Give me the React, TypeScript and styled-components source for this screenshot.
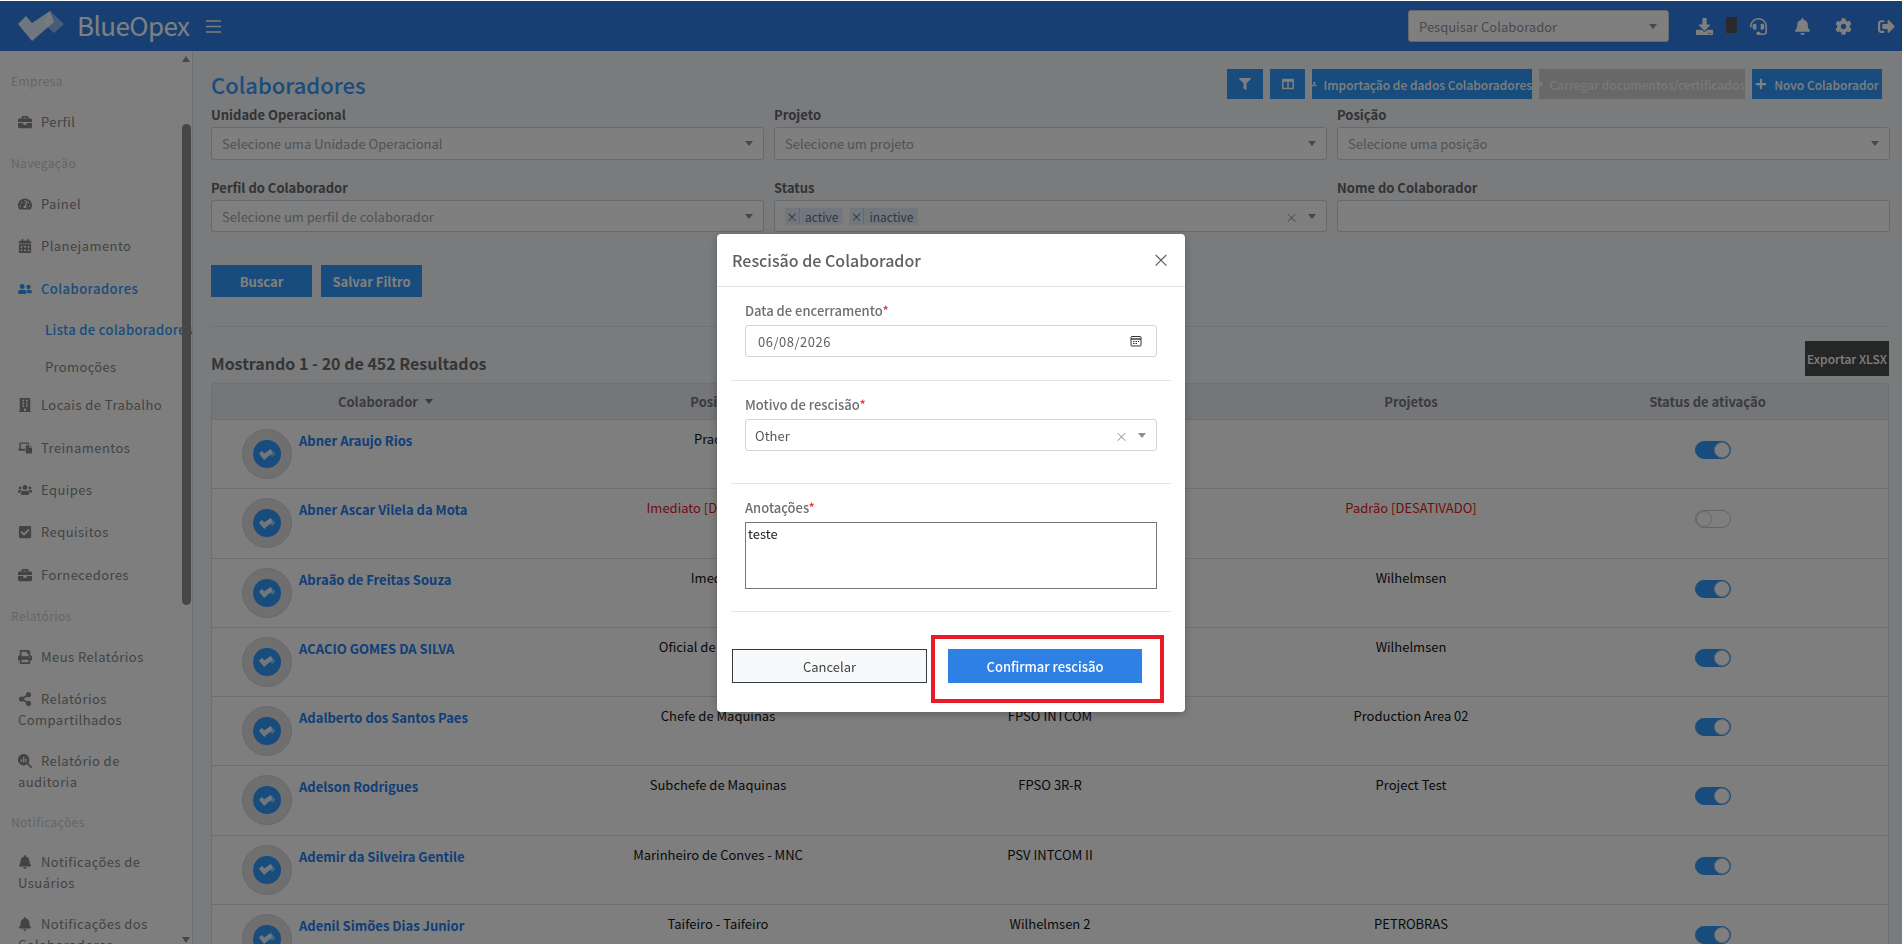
import React from "react";
import styled, { createGlobalStyle } from "styled-components";
import {
  FaBriefcase, FaTachometerAlt, FaCalendarAlt, FaUserFriends, FaBuilding, FaUsers, FaCheckSquare,
  FaPrint, FaShareAlt, FaBell, FaDownload, FaHeadset, FaCog, FaSignOutAlt, FaFilter, FaColumns,
  FaUpload, FaFile, FaPlus,
} from "react-icons/fa";
import { FaLaptopFile, FaMagnifyingGlassChart } from "react-icons/fa6";

const FONT = `"Noto Sans CJK JP", "Noto Sans", sans-serif`;
const BLUE = "#2f7fe6";
const PRIMARY = "#3098f8";

const Global = createGlobalStyle`
  html, body { margin: 0; padding: 0; height: 944px; overflow: hidden; background: #fff; }
  body { padding-top: 1px; box-sizing: border-box; font-family: ${FONT}; font-size: 13px; }
  * { box-sizing: border-box; }
`;

const Shell = styled.div`
  width: 1902px;
  height: 943px;
  display: flex;
  flex-direction: column;
  overflow: hidden;
`;
const TopBar = styled.header`
  height: 50px;
  flex: none;
  background: ${BLUE};
  display: flex;
  align-items: center;
  padding-left: 18px;
`;
const Brand = styled.div`
  display: flex;
  align-items: center;
  width: 188px;
  gap: 13px;
`;
const BrandName = styled.span`
  color: #fff;
  font-size: 26px;
  line-height: 30px;
  letter-spacing: -0.6px;
  margin-top: -2px;
`;
const SearchBox = styled.div`
  margin-left: auto;
  width: 261px;
  height: 32px;
  background: #fff;
  border: 1px solid #ced4da;
  border-radius: 3px;
  display: flex;
  align-items: center;
  justify-content: space-between;
  padding: 0 11px 0 10px;
  color: #8f9499;
  font-size: 13px;
`;
const Caret = styled.i`
  width: 0;
  height: 0;
  border-left: 4px solid transparent;
  border-right: 4px solid transparent;
  border-top: 5px solid #8a8f94;
  flex: none;
`;
const TopIcons = styled.div`
  display: flex;
  align-items: center;
  width: 233px;
  padding-left: 27px;
  color: #fff;
  font-size: 17px;
  position: relative;
`;
const TopIcon = styled.span<{ $w: number }>`
  width: ${(p) => p.$w}px;
  display: flex;
`;
const Phone = styled.i`
  position: absolute;
  left: 57px;
  top: -1px;
  width: 11px;
  height: 16px;
  background: #555;
  border-radius: 1px;
`;
const Body = styled.div`
  flex: 1;
  display: flex;
  min-height: 0;
`;
const Side = styled.aside`
  width: 193px;
  flex: none;
  display: flex;
  background: #fdfdfd;
  border-right: 1px solid #dcdfe3;
  overflow: hidden;
`;
const Nav = styled.nav`
  width: 180px;
  flex: none;
  padding-top: 10px;
`;
const SectionTitle = styled.div`
  height: 40px;
  line-height: 40px;
  padding-left: 11px;
  color: #c6ccd2;
  font-size: 12px;
  letter-spacing: 0.4px;
`;
const Item = styled.div<{ $active?: boolean }>`
  padding: 10.7px 0 10.7px 18px;
  line-height: 19px;
  color: ${(p) => (p.$active ? PRIMARY : "#868686")};
  font-size: 13px;
  letter-spacing: 0.45px;
  font-weight: ${(p) => (p.$active ? 500 : 400)};
`;
const ItemIcon = styled.span`
  display: inline-block;
  width: 23px;
  font-size: 14px;
  vertical-align: -2px;
`;
const SubItem = styled.div<{ $active?: boolean }>`
  height: 37px;
  line-height: 37px;
  padding-left: 45px;
  white-space: nowrap;
  color: ${(p) => (p.$active ? PRIMARY : "#868686")};
  font-weight: ${(p) => (p.$active ? 500 : 400)};
  letter-spacing: 0.35px;
`;
const ScrollTrack = styled.div`
  width: 10px;
  margin-left: 1px;
  flex: none;
  display: flex;
  flex-direction: column;
  align-items: center;
  padding-top: 5px;
`;
const ArrowUp = styled.i`
  width: 0;
  height: 0;
  border-left: 4px solid transparent;
  border-right: 4px solid transparent;
  border-bottom: 6px solid #8e8e8e;
`;
const ArrowDown = styled.i`
  width: 0;
  height: 0;
  margin-top: 332px;
  border-left: 4px solid transparent;
  border-right: 4px solid transparent;
  border-top: 6px solid #8e8e8e;
`;
const Thumb = styled.div`
  width: 9px;
  height: 481px;
  margin-top: 62px;
  background: #8e8e8e;
  border-radius: 5px;
  flex: none;
`;
const Main = styled.main`
  flex: 1;
  background: #f4f7fb;
  padding: 18px 13px 0 18px;
  min-width: 0;
`;
const TitleRow = styled.div`
  display: flex;
  align-items: center;
  justify-content: space-between;
  height: 30px;
`;
const Title = styled.h1`
  margin: 0;
  font-size: 22px;
  line-height: 30px;
  font-weight: 500;
  color: ${PRIMARY};
`;
const Actions = styled.div`
  display: flex;
  gap: 7px;
  margin-right: 7px;
`;
const ActionBtn = styled.div<{ $w: number; $disabled?: boolean }>`
  width: ${(p) => p.$w}px;
  height: 30px;
  background: ${(p) => (p.$disabled ? "#d0d0d0" : PRIMARY)};
  color: ${(p) => (p.$disabled ? "#f2f2f2" : "#fff")};
  display: flex;
  align-items: center;
  justify-content: center;
  gap: 7px;
  font-size: 12px;
  font-weight: 500;
  white-space: nowrap;
`;
const FilterGrid = styled.div`
  display: grid;
  grid-template-columns: 553px 553px 553px;
  column-gap: 10px;
  margin-top: 4px;
`;
const FilterField = styled.div`
  height: 73px;
`;
const FilterLabel = styled.div`
  height: 24px;
  line-height: 24px;
  font-size: 13px;
  font-weight: 600;
  color: #666;
`;
const SelectBox = styled.div<{ $h?: number }>`
  height: ${(p) => p.$h ?? 33}px;
  background: #fff;
  border: 1px solid #ced4da;
  border-radius: 3px;
  display: flex;
  align-items: center;
  justify-content: space-between;
  padding: 0 10px;
  font-size: 13px;
  color: #a0a4a8;
`;
const Tags = styled.div`
  display: flex;
  gap: 6px;
`;
const Tag = styled.span`
  display: flex;
  height: 17px;
  line-height: 17px;
  background: #e3eef9;
  color: #5a6f86;
  font-size: 12px;
  border-radius: 2px;
`;
const TagX = styled.span`
  width: 15px;
  text-align: center;
  border-right: 1px solid #c2d4e6;
`;
const TagText = styled.span`
  padding: 0 5px;
`;
const SelectEnd = styled.div`
  display: flex;
  align-items: center;
  gap: 10px;
  color: #9a9ea3;
`;
const Buttons = styled.div`
  display: flex;
  gap: 9px;
  margin-top: 16px;
`;
const SearchBtn = styled.div`
  width: 101px;
  height: 32px;
  background: ${PRIMARY};
  color: #fff;
  font-weight: 600;
  font-size: 13px;
  display: flex;
  align-items: center;
  justify-content: center;
`;
const Divider = styled.hr`
  margin: 29px 0 0;
  border: 0;
  border-top: 1px solid #dfe3e8;
`;
const ResultRow = styled.div`
  display: flex;
  align-items: center;
  justify-content: space-between;
  height: 35px;
  margin-top: 14px;
  margin-bottom: 7px;
`;
const ResultText = styled.div`
  font-size: 16px;
  font-weight: 600;
  color: #6a6a6a;
  margin-top: 8px;
`;
const ExportBtn = styled.div`
  width: 84px;
  height: 35px;
  background: #4a4c4d;
  color: #fff;
  font-size: 12px;
  font-weight: 500;
  display: flex;
  align-items: center;
  justify-content: center;
`;
const Table = styled.div`
  border: 1px solid #dcdfe3;
  border-bottom: 0;
  border-radius: 4px 4px 0 0;
  background: #fdfdfd;
`;
const Row = styled.div<{ $head?: boolean }>`
  display: grid;
  grid-template-columns: 347px 318px 346px 376px 1fr;
  height: ${(p) => (p.$head ? "36px" : "69.25px")};
  border-bottom: 1px solid #dcdfe3;
  ${(p) => (p.$head ? "background: #e8ecf2; align-items: center;" : "")}
`;
const HeadCell = styled.div<{ $pr?: number }>`
  text-align: center;
  font-size: 13px;
  font-weight: 600;
  color: #777;
  padding-right: ${(p) => p.$pr ?? 0}px;
  display: flex;
  align-items: center;
  justify-content: center;
  gap: 7px;
`;
const SortCaret = styled.i`
  width: 0;
  height: 0;
  border-left: 4.5px solid transparent;
  border-right: 4.5px solid transparent;
  border-top: 5px solid #777;
`;
const PersonCell = styled.div`
  display: flex;
  padding: 9px 0 0 30px;
  gap: 7px;
`;
const Avatar = styled.div`
  width: 50px;
  height: 50px;
  border-radius: 50%;
  background: #dedede;
  border: 1px solid #d2d2d2;
  display: flex;
  align-items: center;
  justify-content: center;
  flex: none;
`;
const AvatarInner = styled.div`
  width: 28px;
  height: 28px;
  border-radius: 50%;
  background: ${PRIMARY};
  display: flex;
  align-items: center;
  justify-content: center;
`;
const Name = styled.div`
  color: #1c7ef0;
  font-weight: 600;
  font-size: 13px;
  line-height: 20px;
  margin-top: 2px;
`;
const Cell = styled.div<{ $red?: boolean }>`
  text-align: center;
  font-size: 13px;
  line-height: 20px;
  padding-top: 9px;
  color: ${(p) => (p.$red ? "#e01818" : "#111")};
`;
const SwitchCell = styled.div`
  padding: 21px 0 0 96px;
`;
const Switch = styled.div<{ $on?: boolean }>`
  width: 36px;
  height: 18px;
  border-radius: 9px;
  background: ${(p) => (p.$on ? PRIMARY : "#fff")};
  border: 1px solid ${(p) => (p.$on ? PRIMARY : "#c8c8c8")};
  display: flex;
  justify-content: ${(p) => (p.$on ? "flex-end" : "flex-start")};
`;
const Knob = styled.i<{ $on?: boolean }>`
  width: 16px;
  height: 16px;
  border-radius: 50%;
  background: #fff;
  border: 1px solid #d0d0d0;
`;
const Backdrop = styled.div`
  position: fixed;
  inset: 1px 0 0 0;
  background: rgba(0, 0, 0, 0.5);
  display: flex;
  justify-content: center;
  align-items: flex-start;
  padding-top: 233px;
`;
const Modal = styled.div`
  width: 468px;
  height: 478px;
  background: #fff;
  border-radius: 4px;
  box-shadow: 0 2px 8px rgba(0, 0, 0, 0.25);
`;
const ModalHead = styled.div`
  height: 53px;
  border-bottom: 1px solid #dee2e6;
  display: flex;
  align-items: center;
  justify-content: space-between;
  padding: 0 15px;
`;
const ModalTitle = styled.div`
  font-size: 16px;
  font-weight: 500;
  color: #5c5f63;
`;
const Close = styled.span`
  color: #60646a;
  font-size: 18px;
  line-height: 18px;
  margin-top: -2px;
`;
const ModalBody = styled.div`
  padding: 0 14px;
`;
const Field = styled.div<{ $h: number }>`
  height: ${(p) => p.$h}px;
  padding: 14px 14px 0;
  border-bottom: 1px solid #e2e5e9;
`;
const FieldLabel = styled.div`
  font-size: 13px;
  line-height: 20px;
  margin-bottom: 4px;
  font-weight: 500;
  color: #6b6e72;
  & b {
    color: #e8363c;
    font-weight: 500;
  }
`;
const DateBox = styled.div`
  height: 32px;
  border: 1px solid #ced4da;
  border-radius: 3px;
  display: flex;
  align-items: center;
  justify-content: space-between;
  padding: 0 14px 0 12px;
  color: #5e6266;
  letter-spacing: 0.5px;
`;
const ReasonBox = styled(DateBox)`
  padding: 0 10px 0 9px;
  color: #555;
  letter-spacing: 0;
`;
const NotesBox = styled.div`
  height: 67px;
  border: 1px solid #767676;
  padding: 1px 2px;
  font-size: 13px;
  line-height: 20px;
  color: #222;
`;
const Foot = styled.div`
  display: flex;
  padding: 37px 0 0 15px;
  gap: 21px;
`;
const CancelBtn = styled.div`
  width: 195px;
  height: 34px;
  background: #f8f9fa;
  border: 1px solid #343a40;
  color: #444;
  display: flex;
  align-items: center;
  justify-content: center;
  font-size: 13px;
`;
const ConfirmBtn = styled.div`
  position: relative;
  width: 194px;
  height: 34px;
  background: #2f80e4;
  color: #fff;
  display: flex;
  align-items: center;
  justify-content: center;
  font-size: 13px;
  font-weight: 500;
`;
const Highlight = styled.i`
  position: absolute;
  left: -17px;
  right: -22px;
  top: -14px;
  bottom: -20px;
  border: 4px solid #e81c24;
  pointer-events: none;
`;

const Logo = ({ h = 30 }: { h?: number }) => (
  <svg width={(h * 46) / 30} height={h} viewBox="0 0 46 30" aria-hidden>
    <polygon points="32,0 46,13 36,22 25,12" fill="#fff" fillOpacity="0.45" />
    <polygon points="0,13 8,5 14,12 32,0 36,11 14,30" fill="#fff" fillOpacity="0.85" />
  </svg>
);

const CalendarGlyph = () => (
  <svg width="12" height="12" viewBox="0 0 12 12" fill="none" stroke="#333" strokeWidth="1" aria-hidden>
    <rect x="1" y="1.5" width="10" height="9.5" rx="1" />
    <path d="M1 4h10" strokeWidth="1.4" />
    <path d="M3 6.5h1.5M5.5 6.5H7M8 6.5h1M3 8.5h1.5M5.5 8.5H7" />
  </svg>
);

const Bars = () => (
  <svg width="15" height="13" viewBox="0 0 15 13" aria-hidden>
    <path d="M0 1h15M0 6.5h15M0 12h15" stroke="#fff" strokeWidth="1.6" />
  </svg>
);

const people = [
  { n: "Abner Araujo Rios", p: "Pracista", u: "FPSO Atlanta", j: "", on: true },
  { n: "Abner Ascar Vilela da Mota", p: "Imediato [DESATIVADO]", u: "", j: "Padrão [DESATIVADO]", red: true, on: false },
  { n: "Abraão de Freitas Souza", p: "Imediato", u: "", j: "Wilhelmsen", on: true },
  { n: "ACACIO GOMES DA SILVA", p: "Oficial de Máquinas", u: "", j: "Wilhelmsen", on: true },
  { n: "Adalberto dos Santos Paes", p: "Chefe de Maquinas", u: "FPSO INTCOM", j: "Production Area 02", on: true },
  { n: "Adelson Rodrigues", p: "Subchefe de Maquinas", u: "FPSO 3R-R", j: "Project Test", on: true },
  { n: "Ademir da Silveira Gentile", p: "Marinheiro de Conves - MNC", u: "PSV INTCOM II", j: "", on: true },
  { n: "Adenil Simões Dias Junior", p: "Taifeiro - Taifeiro", u: "Wilhelmsen 2", j: "PETROBRAS", on: true },
];

const NavItem = ({ icon, label, active }: { icon: React.ReactNode; label: string; active?: boolean }) => (
  <Item $active={active}>
    <ItemIcon>{icon}</ItemIcon>
    {label}
  </Item>
);

export default function App() {
  return (
    <>
      <Global />
      <Shell>
        <TopBar>
          <Brand>
            <Logo />
            <BrandName>BlueOpex</BrandName>
          </Brand>
          <Bars />
          <SearchBox>
            Pesquisar Colaborador
            <Caret />
          </SearchBox>
          <TopIcons>
            <Phone />
            <TopIcon $w={54}><FaDownload /></TopIcon>
            <TopIcon $w={44}><FaHeadset /></TopIcon>
            <TopIcon $w={41}><FaBell /></TopIcon>
            <TopIcon $w={43}><FaCog /></TopIcon>
            <TopIcon $w={17}><FaSignOutAlt /></TopIcon>
          </TopIcons>
        </TopBar>
        <Body>
          <Side>
            <Nav>
              <SectionTitle>Empresa</SectionTitle>
              <NavItem icon={<FaBriefcase />} label="Perfil" />
              <SectionTitle>Navegação</SectionTitle>
              <NavItem icon={<FaTachometerAlt />} label="Painel" />
              <NavItem icon={<FaCalendarAlt />} label="Planejamento" />
              <NavItem icon={<FaUserFriends />} label="Colaboradores" active />
              <SubItem $active>Lista de colaboradores</SubItem>
              <SubItem>Promoções</SubItem>
              <NavItem icon={<FaBuilding />} label="Locais de Trabalho" />
              <NavItem icon={<FaLaptopFile />} label="Treinamentos" />
              <NavItem icon={<FaUsers />} label="Equipes" />
              <NavItem icon={<FaCheckSquare />} label="Requisitos" />
              <NavItem icon={<FaBriefcase />} label="Fornecedores" />
              <SectionTitle>Relatórios</SectionTitle>
              <NavItem icon={<FaPrint />} label="Meus Relatórios" />
              <NavItem icon={<FaShareAlt />} label="Relatórios Compartilhados" />
              <NavItem icon={<FaMagnifyingGlassChart />} label="Relatório de auditoria" />
              <SectionTitle>Notificações</SectionTitle>
              <NavItem icon={<FaBell />} label="Notificações de Usuários" />
              <NavItem icon={<FaBell />} label="Notificações dos Colaboradores" />
            </Nav>
            <ScrollTrack>
              <ArrowUp />
              <Thumb />
              <ArrowDown />
            </ScrollTrack>
          </Side>
          <Main>
            <TitleRow>
              <Title>Colaboradores</Title>
              <Actions>
                <ActionBtn $w={36}><FaFilter /></ActionBtn>
                <ActionBtn $w={35}><FaColumns /></ActionBtn>
                <ActionBtn $w={220}><FaUpload />Importação de dados Colaboradores</ActionBtn>
                <ActionBtn $w={206} $disabled><FaFile />Carregar documentos/certificados</ActionBtn>
                <ActionBtn $w={130}><FaPlus />Novo Colaborador</ActionBtn>
              </Actions>
            </TitleRow>
            <FilterGrid>
              <FilterField>
                <FilterLabel>Unidade Operacional</FilterLabel>
                <SelectBox>Selecione uma Unidade Operacional<Caret /></SelectBox>
              </FilterField>
              <FilterField>
                <FilterLabel>Projeto</FilterLabel>
                <SelectBox>Selecione um projeto<Caret /></SelectBox>
              </FilterField>
              <FilterField>
                <FilterLabel>Posição</FilterLabel>
                <SelectBox>Selecione uma posição<Caret /></SelectBox>
              </FilterField>
              <FilterField>
                <FilterLabel>Perfil do Colaborador</FilterLabel>
                <SelectBox $h={32}>Selecione um perfil de colaborador<Caret /></SelectBox>
              </FilterField>
              <FilterField>
                <FilterLabel>Status</FilterLabel>
                <SelectBox $h={32}>
                  <Tags>
                    <Tag><TagX>×</TagX><TagText>active</TagText></Tag>
                    <Tag><TagX>×</TagX><TagText>inactive</TagText></Tag>
                  </Tags>
                  <SelectEnd>×<Caret /></SelectEnd>
                </SelectBox>
              </FilterField>
              <FilterField>
                <FilterLabel>Nome do Colaborador</FilterLabel>
                <SelectBox $h={32} />
              </FilterField>
            </FilterGrid>
            <Buttons>
              <SearchBtn>Buscar</SearchBtn>
              <SearchBtn>Salvar Filtro</SearchBtn>
            </Buttons>
            <Divider />
            <ResultRow>
              <ResultText>Mostrando 1 - 20 de 452 Resultados</ResultText>
              <ExportBtn>Exportar XLSX</ExportBtn>
            </ResultRow>
            <Table>
              <Row $head>
                <HeadCell>Colaborador<SortCaret /></HeadCell>
                <HeadCell>Posições</HeadCell>
                <HeadCell>Unidades</HeadCell>
                <HeadCell>Projetos</HeadCell>
                <HeadCell $pr={72}>Status de ativação</HeadCell>
              </Row>
              {people.map((p) => (
                <Row key={p.n}>
                  <PersonCell>
                    <Avatar><AvatarInner><Logo h={11} /></AvatarInner></Avatar>
                    <Name>{p.n}</Name>
                  </PersonCell>
                  <Cell $red={p.red}>{p.p}</Cell>
                  <Cell>{p.u}</Cell>
                  <Cell $red={p.red}>{p.j}</Cell>
                  <SwitchCell><Switch $on={p.on}><Knob /></Switch></SwitchCell>
                </Row>
              ))}
            </Table>
          </Main>
        </Body>
      </Shell>
      <Backdrop>
        <Modal>
          <ModalHead>
            <ModalTitle>Rescisão de Colaborador</ModalTitle>
            <Close>×</Close>
          </ModalHead>
          <ModalBody>
            <Field $h={94}>
              <FieldLabel>Data de encerramento<b>*</b></FieldLabel>
              <DateBox>06/08/2026<CalendarGlyph /></DateBox>
            </Field>
            <Field $h={103}>
              <FieldLabel>Motivo de rescisão<b>*</b></FieldLabel>
              <ReasonBox>Other<SelectEnd>×<Caret /></SelectEnd></ReasonBox>
            </Field>
            <Field $h={128}>
              <FieldLabel>Anotações<b>*</b></FieldLabel>
              <NotesBox>teste</NotesBox>
            </Field>
          </ModalBody>
          <Foot>
            <CancelBtn>Cancelar</CancelBtn>
            <ConfirmBtn>Confirmar rescisão<Highlight /></ConfirmBtn>
          </Foot>
        </Modal>
      </Backdrop>
    </>
  );
}
